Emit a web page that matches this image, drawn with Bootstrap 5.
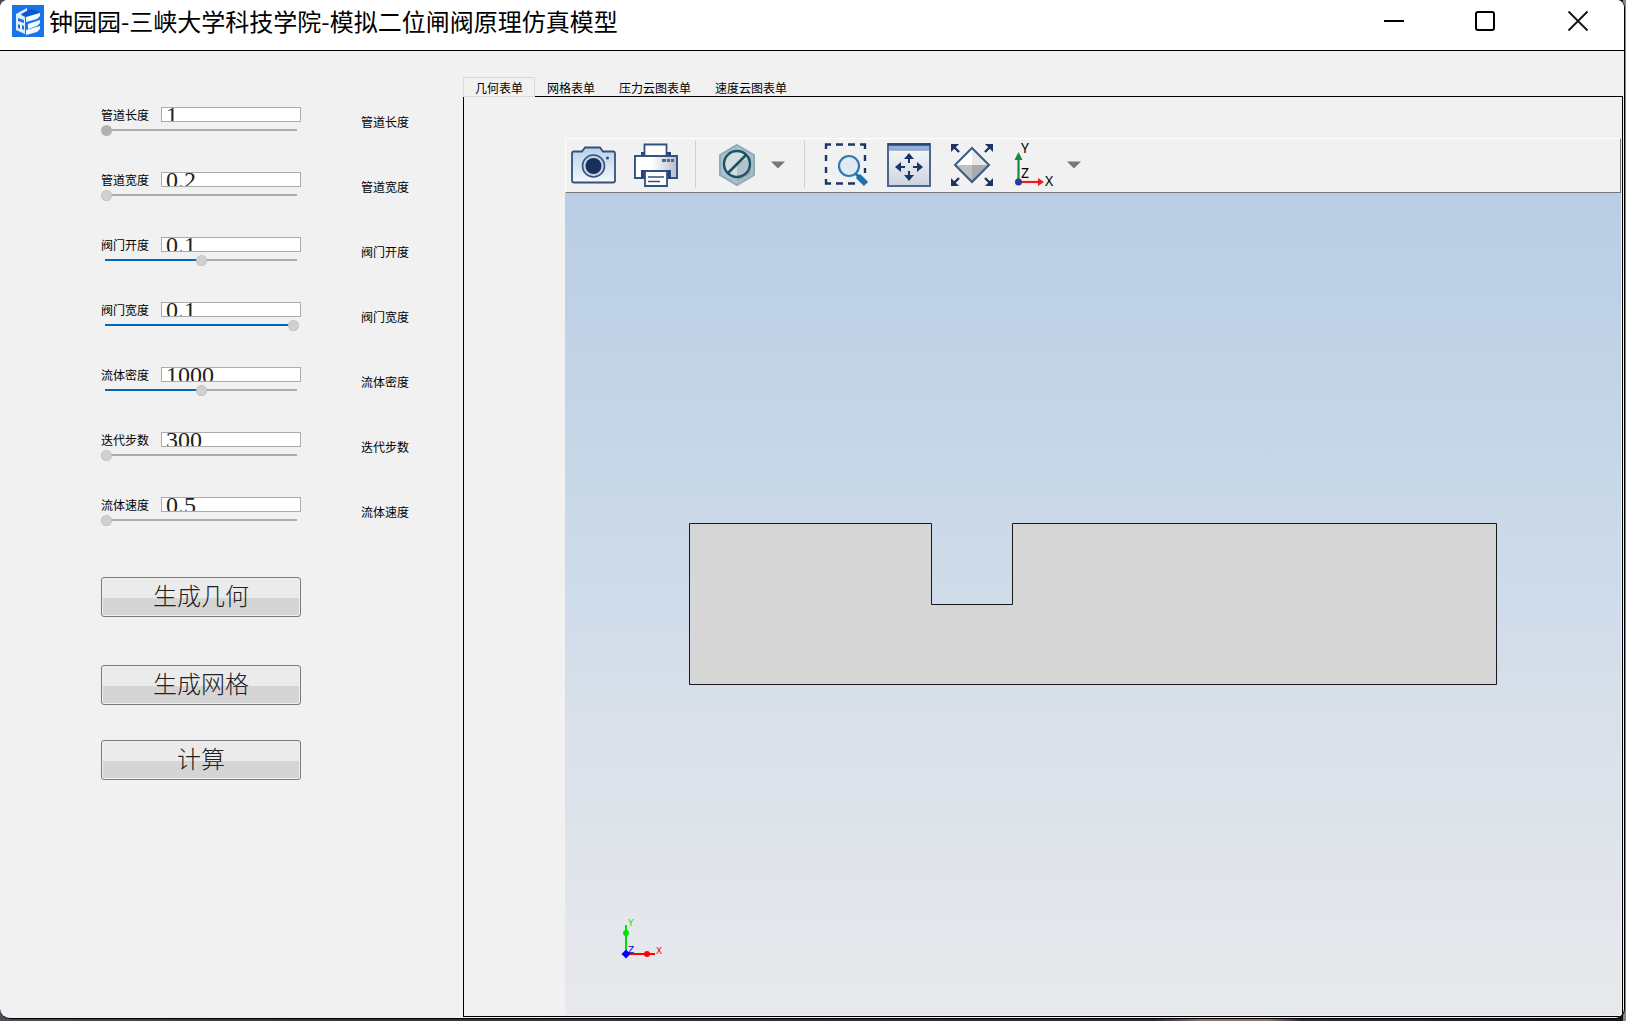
<!DOCTYPE html>
<html lang="zh-CN">
<head>
<meta charset="utf-8">
<meta name="viewport" content="width=device-width, initial-scale=1">
<title>钟园园-三峡大学科技学院-模拟二位闸阀原理仿真模型</title>
<link href="https://cdn.jsdelivr.net/npm/bootstrap@5.3.0/dist/css/bootstrap.min.css" rel="stylesheet">
<style>
html, body { height: 100%; }
body { font: 12px/15px "Noto Sans CJK SC", sans-serif; color: #000; background: linear-gradient(90deg, #4a4d55, #33393d 18%, #2a2a30 71%, #8d7478 74%, #8d7478 78%, #2f2b31 80%, #151515 99.8%, #8f8480 99.8%); padding: 0 1px 2px 0; overflow: hidden; }
.app-window { background: #f1f1f1; border: solid #000; border-width: 0 1px 1px 0; border-radius: 8px 8px 10px 10px; overflow: hidden; }
.title-bar { height: 51px; background: #fff; border-bottom: 1px solid #000; padding: 0 0 8px 12px; }
.title-text { font-size: 24px; line-height: 32px; margin-left: 5px; font-weight: 400; }
.win-btn { width: 92px; height: 42px; border-radius: 0; padding: 0 0 4px; }
.side-form { flex: 0 0 463px; padding: 56px 0 0 101px; }
.param-row { gap: 60px; margin-bottom: 36px; }
.param-main { width: 200px; }
.param-main label { width: 60px; }
.param-box { width: 140px; height: 15px; min-height: 0; padding: 2px 4px 0; border: 1px solid #ababab; border-radius: 0; background: #fff; color: #222; font: 24px/24px "Liberation Serif", serif; }
.param-range { appearance: none; display: block; width: 198px; height: 12px; margin-top: 2px; background: linear-gradient(#0067b9, #0067b9) 4px 5px / var(--fill) 2px no-repeat, linear-gradient(#ababab, #ababab) 4px 5px / 192px 2px no-repeat; }
.param-range::-webkit-slider-runnable-track { height: 12px; background: transparent; }
.param-range::-webkit-slider-thumb { appearance: none; width: 11px; height: 11px; margin-top: 1px; border-radius: 50%; background: #d0d0d0; border: 1px dotted #b4b4b4; }
.param-range.is-hot::-webkit-slider-thumb { background: #adb2b5; }
.cmd-list { padding-top: 15px; }
.cmd-btn { width: 200px; height: 40px; padding: 0 0 4px; border: 1px solid #7a7a7a; border-radius: 3px; background: linear-gradient(#ebebeb 0 52%, #d5d5d5 52%); box-shadow: inset 0 0 0 1px #f0f0f0; color: #222; font-size: 24px; line-height: 34px; font-weight: 300; }
.cmd-last { margin-top: 35px; }
.tab-area { padding: 26px 1px 1px 0; }
.form-tabs { --bs-nav-tabs-border-width: 0; border: 0; height: 20px; }
.form-tabs .nav-link { color: #000; padding: 3px 11px 2px; border: 1px solid transparent; border-radius: 0; margin: 0; height: 20px; line-height: 14px; position: relative; z-index: 1; }
.form-tabs .nav-link.active { color: #000; background: #f1f1f1; border-color: #d9d9d9; }
.tab-body { border: 1px solid #000; margin-top: -1px; padding: 41px 1px 1px 101px; }
.tool-strip { height: 55px; border: solid #fff; border-width: 1px 0 0 1px; border-bottom: 1px solid #777; border-right: 1px solid #777; padding: 0 0 2px 5px; gap: 19px; }
.tool-strip .btn { border-radius: 0; }
.tool-strip svg { display: block; overflow: visible; }
.tool-pair { gap: 10px; }
.tool-sep { width: 1px; height: 47px; background: #cfcfcf; margin-left: -2px; }
.view-canvas { background: linear-gradient(#b9cde4, #cfdce9 50%, #d9e0ea 64%, #e8e9ec); }
.triad { left: 55px; bottom: 55px; }
</style>
</head>
<body>
<div class="app-window d-flex flex-column h-100">
  <header class="title-bar d-flex align-items-center">
    <svg width="32" height="32" viewBox="0 0 32 32" aria-hidden="true">
      <rect width="32" height="32" fill="#1874e8"/>
      <path d="M4 9L15 3v3l-6 4 4 2v17l-9-4z" fill="#e3edfb"/>
      <path d="M9 9l10-5 9 3-13 5z" fill="#0b55d0"/>
      <path d="M6 13l6 2v3l-6-2zM6 19l2 1v4l-2-1zM10 20l2 1v4l-2-1z" fill="#1874e8"/>
      <path d="M14 12l14-4v3l-3 3-11 3zM16 19l12-4v3l-3 3-9 3zM14 25l14-4v3l-3 3-11 3z" fill="#f4f8ff"/>
    </svg>
    <h1 class="title-text mb-0 me-auto text-nowrap">钟园园-三峡大学科技学院-模拟二位闸阀原理仿真模型</h1>
    <button type="button" class="btn win-btn" aria-label="最小化"><svg width="22" height="22"><path d="M1 11h20" stroke="#000" stroke-width="2"/></svg></button>
    <button type="button" class="btn win-btn" aria-label="最大化"><svg width="22" height="22"><rect x="1" y="2" width="18" height="18" rx="2" fill="none" stroke="#000" stroke-width="2"/></svg></button>
    <button type="button" class="btn win-btn" aria-label="关闭"><svg width="22" height="22"><path d="M1.500 1.500l19 19M20.500 1.500l-19 19" stroke="#111" stroke-width="1.800"/></svg></button>
  </header>

  <main class="d-flex flex-grow-1">
    <form class="side-form">
      <div class="param-row d-flex align-items-center"><div class="param-main"><div class="d-flex"><label for="p1">管道长度</label><input id="p1" class="form-control param-box" value="1"></div><input type="range" class="param-range is-hot" aria-label="管道长度" value="0" style="--fill:0px"></div><span>管道长度</span></div>
      <div class="param-row d-flex align-items-center"><div class="param-main"><div class="d-flex"><label for="p2">管道宽度</label><input id="p2" class="form-control param-box" value="0.2"></div><input type="range" class="param-range" aria-label="管道宽度" value="0" style="--fill:0px"></div><span>管道宽度</span></div>
      <div class="param-row d-flex align-items-center"><div class="param-main"><div class="d-flex"><label for="p3">阀门开度</label><input id="p3" class="form-control param-box" value="0.1"></div><input type="range" class="param-range" aria-label="阀门开度" value="51" style="--fill:96px"></div><span>阀门开度</span></div>
      <div class="param-row d-flex align-items-center"><div class="param-main"><div class="d-flex"><label for="p4">阀门宽度</label><input id="p4" class="form-control param-box" value="0.1"></div><input type="range" class="param-range" aria-label="阀门宽度" value="100" style="--fill:188px"></div><span>阀门宽度</span></div>
      <div class="param-row d-flex align-items-center"><div class="param-main"><div class="d-flex"><label for="p5">流体密度</label><input id="p5" class="form-control param-box" value="1000"></div><input type="range" class="param-range" aria-label="流体密度" value="51" style="--fill:96px"></div><span>流体密度</span></div>
      <div class="param-row d-flex align-items-center"><div class="param-main"><div class="d-flex"><label for="p6">迭代步数</label><input id="p6" class="form-control param-box" value="300"></div><input type="range" class="param-range" aria-label="迭代步数" value="0" style="--fill:0px"></div><span>迭代步数</span></div>
      <div class="param-row d-flex align-items-center"><div class="param-main"><div class="d-flex"><label for="p7">流体速度</label><input id="p7" class="form-control param-box" value="0.5"></div><input type="range" class="param-range" aria-label="流体速度" value="0" style="--fill:0px"></div><span>流体速度</span></div>
      <div class="cmd-list d-flex flex-column">
        <button type="button" class="btn cmd-btn mb-5">生成几何</button>
        <button type="button" class="btn cmd-btn">生成网格</button>
        <button type="button" class="btn cmd-btn cmd-last">计算</button>
      </div>
    </form>

    <section class="tab-area flex-grow-1 d-flex flex-column">
      <ul class="nav nav-tabs form-tabs" role="tablist">
        <li class="nav-item"><button type="button" class="nav-link active" role="tab" aria-selected="true">几何表单</button></li>
        <li class="nav-item"><button type="button" class="nav-link" role="tab">网格表单</button></li>
        <li class="nav-item"><button type="button" class="nav-link" role="tab">压力云图表单</button></li>
        <li class="nav-item"><button type="button" class="nav-link" role="tab">速度云图表单</button></li>
      </ul>
      <div class="tab-body flex-grow-1 d-flex flex-column">
        <div class="tool-strip d-flex align-items-center" role="toolbar">
          <button type="button" class="btn border-0 p-0" aria-label="截图">
            <svg width="44" height="44" viewBox="0 0 44 44">
              <defs><linearGradient id="cam" x2="0" y2="1"><stop stop-color="#b7cfe9"/><stop offset="1" stop-color="#f4f8fc"/></linearGradient></defs>
              <path d="M3 8.500h8l3-4h15l3 4h10q2 0 2 2v27q0 2-2 2H3q-2 0-2-2v-27q0-2 2-2z" fill="url(#cam)" stroke="#35517f" stroke-width="1.800"/>
              <circle cx="22.500" cy="23" r="11" fill="#c4d5e8" stroke="#35517f" stroke-width="1.600"/><circle cx="22.500" cy="23" r="8" fill="#182f5c"/><circle cx="36.500" cy="15" r="1.600" fill="#35517f"/>
            </svg></button>
          <button type="button" class="btn border-0 p-0" aria-label="打印">
            <svg width="44" height="44" viewBox="0 0 44 44">
              <defs><linearGradient id="prn" x2="1"><stop offset=".4" stop-color="#fff"/><stop offset="1" stop-color="#b6bccb"/></linearGradient></defs>
              <path d="M7 9h30v4H7z" fill="#27457c"/><path d="M10.500 1.500h22v12h-22z" fill="#fff" stroke="#35517f" stroke-width="1.800"/>
              <path d="M1 13h42v22h-7v-7H8v7H1z" fill="url(#prn)" stroke="#35517f" stroke-width="1.800"/><path d="M1 13h42v22H1z" fill="url(#prn)" stroke="#35517f" stroke-width="1.800"/><path d="M7 27h30v9H7z" fill="#27457c"/>
              <path d="M11 28h22v15H11z" fill="#fff" stroke="#35517f" stroke-width="1.800"/>
              <path d="M14 34h16M14 38.500h12" stroke="#35517f" stroke-width="1.600"/><path d="M28 16h4v3h-4zM33 16h3v3h-3zM37 16h3v3h-3z" fill="#526a92"/>
            </svg></button>
          <div class="tool-sep"></div>
          <div class="tool-pair d-flex align-items-center">
            <button type="button" class="btn border-0 p-0" aria-label="透明">
              <svg width="44" height="44" viewBox="0 0 44 44">
                <path d="M22 2l17 10v20L22 42 5 32V12z" fill="#a9c1ca" stroke="#8eabb6" stroke-width="2"/><path d="M22 21l14-8v18l-14 8z" fill="#9aabb5"/>
                <circle cx="22" cy="21" r="13" fill="#d4dde2"/><path d="M22 21l12-6q3 14-6 18l-6 1z" fill="#b3c1c9"/>
                <circle cx="22" cy="21" r="13" fill="none" stroke="#1c5264" stroke-width="2.400"/><path d="M31 12L13 30" stroke="#1c5264" stroke-width="2.600"/>
              </svg></button>
            <button type="button" class="btn border-0 p-0" aria-label="透明选项"><svg width="18" height="8"><path d="M2 .5h14L9 7.500z" fill="#777"/></svg></button>
          </div>
          <div class="tool-sep"></div>
          <button type="button" class="btn border-0 p-0" aria-label="框选缩放">
            <svg width="44" height="44" viewBox="0 0 44 44">
              <path d="M2 6V1.500h5M12 1.500h7M24 1.500h7M36 1.500h5V6M41 12v6M41 25v5M2 12v6M2 24v6M2 36v4.500h5M12 40.500h7M24 40.500h7" fill="none" stroke="#1c3566" stroke-width="2.400"/>
              <path d="M32 31l3 3" stroke="#1d6fae" stroke-width="3"/><path d="M34 33l8 8" stroke="#1d6fae" stroke-width="6"/><circle cx="25" cy="23" r="10" fill="#e3eaef" stroke="#2b7dba" stroke-width="2.200"/>
            </svg></button>
          <button type="button" class="btn border-0 p-0" aria-label="平移">
            <svg width="44" height="44" viewBox="0 0 44 44">
              <defs><linearGradient id="pan" x2="0" y2="1"><stop stop-color="#fafbfc"/><stop offset="1" stop-color="#cdd3de"/></linearGradient></defs>
              <path d="M1 1h42v42H1z" fill="url(#pan)" stroke="#4b6690" stroke-width="2"/><path d="M2 2h40v4.500H2z" fill="#8fb0d8"/><path d="M1 1.500h42" stroke="#2b4675" stroke-width="2.500"/><path d="M1 7h42" stroke="#5f7da8"/>
              <g fill="#1c3566"><path d="M22 10l5 6h-4v4h-2v-4h-4z"/><path d="M22 38l5-6h-4v-4h-2v4h-4z"/><path d="M8 24l6-5v4h4v2h-4v4z"/><path d="M36 24l-6-5v4h-4v2h4v4z"/></g>
            </svg></button>
          <button type="button" class="btn border-0 p-0" aria-label="缩放至全部">
            <svg width="44" height="44" viewBox="0 0 44 44">
              <path d="M22 5L39 22H5z" fill="#e8e8e8"/><path d="M22 5v17H5z" fill="#fff"/><path d="M5 22h34L22 39z" fill="#a7abb0"/><path d="M5 22h17v17z" fill="#bfc0c2"/>
              <path d="M22 5l17 17-17 17L5 22z" fill="none" stroke="#3b5a86" stroke-width="2"/>
              <g fill="#1c3566"><path d="M1 1h8L1 9zM43 1h-8l8 8zM1 43h8l-8-8zM43 43h-8l8-8z"/></g><path d="M3 3l6 6M41 3l-6 6M3 41l6-6M41 41l-6-6" stroke="#1c3566" stroke-width="2.400"/>
            </svg></button>
          <div class="tool-pair d-flex align-items-center">
            <button type="button" class="btn border-0 p-0" aria-label="视图方向">
              <svg width="42" height="44" viewBox="0 0 42 44" font-family="Noto Sans, sans-serif" font-size="14" fill="#000">
                <path d="M5.500 38V16" stroke="#1c8a3c" stroke-width="2.200"/><path d="M5.500 9l4 8h-8z" fill="#1c8a3c"/>
                <path d="M6 39h20" stroke="#ee1c1c" stroke-width="2.200"/><path d="M31 39l-6 4v-8z" fill="#ee1c1c"/><circle cx="5.500" cy="39" r="3.500" fill="#1f3f9c"/>
                <text x="8" y="10">Y</text><text x="8" y="35">Z</text><text x="32" y="43">X</text>
              </svg></button>
            <button type="button" class="btn border-0 p-0" aria-label="视图选项"><svg width="18" height="8"><path d="M2 .5h14L9 7.500z" fill="#777"/></svg></button>
          </div>
        </div>
        <div class="view-canvas flex-grow-1 d-flex align-items-center justify-content-center position-relative">
          <svg width="808" height="162" viewBox="0 0 808 162" role="img" aria-label="几何模型"><path d="M.5 .5h242v81h81v-81h484v161H.5z" fill="#d6d6d6" stroke="#1a1a1a"/></svg>
          <svg class="triad position-absolute" width="50" height="45" viewBox="0 0 50 45" font-family="DejaVu Sans, sans-serif" font-size="9">
            <path d="M6 39V10" stroke="#00e000" stroke-width="2"/><circle cx="6" cy="18" r="3" fill="#00e000"/>
            <path d="M6 39h29" stroke="#f00" stroke-width="2"/><circle cx="27" cy="39" r="3" fill="#f00"/>
            <path d="M6 34.500l4.500 4.500L6 43.500 1.500 39z" fill="#00f"/>
            <text x="8" y="11" fill="#00e000">Y</text><text x="8" y="38" fill="#00c">Z</text><text x="36" y="39" fill="#f00">X</text>
          </svg>
        </div>
      </div>
    </section>
  </main>
</div>
<script src="https://cdn.jsdelivr.net/npm/bootstrap@5.3.0/dist/js/bootstrap.bundle.min.js"></script>
</body>
</html>
